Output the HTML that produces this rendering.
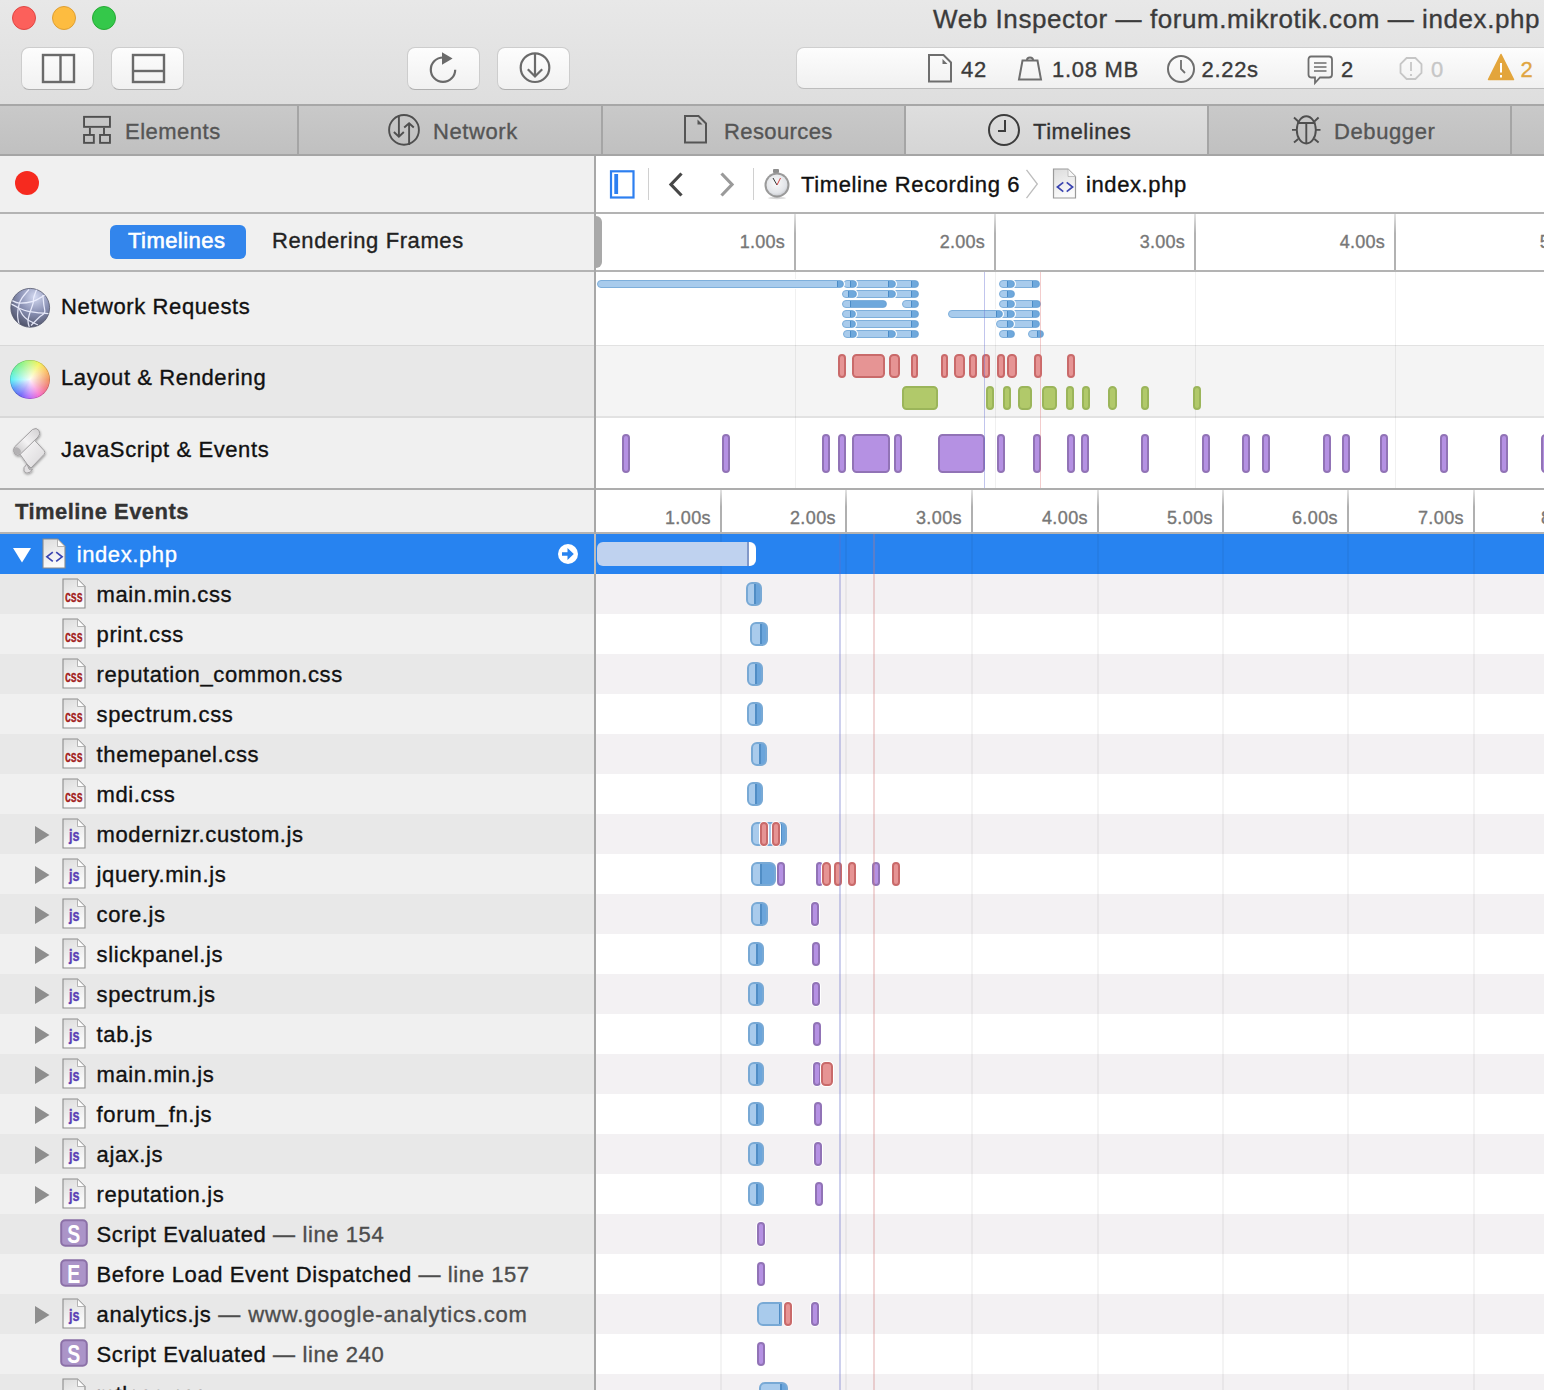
<!DOCTYPE html><html><head><meta charset="utf-8"><style>
html,body{margin:0;padding:0;width:1544px;height:1390px;overflow:hidden;background:#fff}
body{position:relative;font-family:"Liberation Sans",sans-serif}
div{position:absolute}
.t{white-space:pre;line-height:1;-webkit-text-stroke-width:0.35px}
</style></head><body>
<div style="left:0px;top:0px;width:1544px;height:104px;background:linear-gradient(#e8e8e8,#dedede)"></div>
<div style="left:0px;top:104px;width:1544px;height:2px;background:#a7a7a7"></div>
<svg style="position:absolute;left:0px;top:0px;" width="130" height="40" viewBox="0 0 130 40"><circle cx="24" cy="18" r="11.5" fill="#fc605b" stroke="#df4744" stroke-width="1"/><circle cx="64" cy="18" r="11.5" fill="#fdbc40" stroke="#de9f34" stroke-width="1"/><circle cx="104" cy="18" r="11.5" fill="#34c84a" stroke="#27aa35" stroke-width="1"/></svg>
<div style="left:21px;top:46.5px;width:73px;height:43px;box-sizing:border-box;border-radius:8px;background:linear-gradient(#fdfdfd,#f1f1f1);border:1px solid #cdcdcd;border-bottom-color:#b0b0b0"></div>
<div style="left:111px;top:46.5px;width:73px;height:43px;box-sizing:border-box;border-radius:8px;background:linear-gradient(#fdfdfd,#f1f1f1);border:1px solid #cdcdcd;border-bottom-color:#b0b0b0"></div>
<div style="left:407px;top:46.5px;width:73px;height:43px;box-sizing:border-box;border-radius:8px;background:linear-gradient(#fdfdfd,#f1f1f1);border:1px solid #cdcdcd;border-bottom-color:#b0b0b0"></div>
<div style="left:497px;top:46.5px;width:73px;height:43px;box-sizing:border-box;border-radius:8px;background:linear-gradient(#fdfdfd,#f1f1f1);border:1px solid #cdcdcd;border-bottom-color:#b0b0b0"></div>
<svg style="position:absolute;left:21px;top:47px;" width="72" height="42" viewBox="0 0 72 42"><rect x="22" y="8" width="31" height="27" fill="none" stroke="#6a6a6a" stroke-width="2.4"/><line x1="39.5" y1="8" x2="39.5" y2="35" stroke="#6a6a6a" stroke-width="2.4"/></svg>
<svg style="position:absolute;left:111px;top:47px;" width="72" height="42" viewBox="0 0 72 42"><rect x="22" y="8" width="31" height="27" fill="none" stroke="#6a6a6a" stroke-width="2.4"/><line x1="22" y1="24" x2="53" y2="24" stroke="#6a6a6a" stroke-width="2.4"/></svg>
<svg style="position:absolute;left:407px;top:47px;" width="73" height="42" viewBox="0 0 73 42"><path d="M36 10.5 A 12.2 12.2 0 1 0 48.2 22.7" fill="none" stroke="#6a6a6a" stroke-width="2.2"/><path d="M35 5.2 L45.6 11.6 L35 17.8 Z" fill="#6a6a6a"/></svg>
<svg style="position:absolute;left:497px;top:47px;" width="73" height="42" viewBox="0 0 73 42"><circle cx="38" cy="20.7" r="14.3" fill="none" stroke="#6a6a6a" stroke-width="2.2"/><path d="M38 7 V29.5 M30.8 22.2 L38 29.5 L45.2 22.2" fill="none" stroke="#6a6a6a" stroke-width="2.2"/></svg>
<div class="t" style="left:933px;top:5.59px;font-size:26px;letter-spacing:0.58px;font-weight:400;color:#3b3b3b;">Web Inspector — forum.mikrotik.com — index.php</div>
<div style="left:796px;top:47px;width:760px;height:42px;box-sizing:border-box;border-radius:8px;background:linear-gradient(#fdfdfd,#f0f0f0);border:1px solid #cfcfcf;border-bottom-color:#bdbdbd"></div>
<svg style="position:absolute;left:926px;top:52px;" width="30" height="33" viewBox="0 0 30 33"><path d="M3 3 H17.5 L25 10.5 V29.5 H3 Z" fill="none" stroke="#6e6e6e" stroke-width="2"/><path d="M16.5 7 L21.5 12 H16.5 Z" fill="#6e6e6e"/></svg>
<div class="t" style="left:961px;top:59.18px;font-size:22px;letter-spacing:0.8px;font-weight:400;color:#3a3a3a;">42</div>
<svg style="position:absolute;left:1016px;top:54px;" width="30" height="30" viewBox="0 0 30 30"><path d="M6.5 6.5 H21.5 L25 25.5 H3 Z" fill="none" stroke="#6e6e6e" stroke-width="2"/><path d="M11 6 A3 2.6 0 0 1 17 6" fill="none" stroke="#6e6e6e" stroke-width="2"/></svg>
<div class="t" style="left:1052px;top:59.18px;font-size:22px;letter-spacing:0.7px;font-weight:400;color:#3a3a3a;">1.08 MB</div>
<svg style="position:absolute;left:1164px;top:52px;" width="34" height="34" viewBox="0 0 34 34"><circle cx="17" cy="17" r="13" fill="none" stroke="#6e6e6e" stroke-width="2"/><path d="M17 8 V17 L21 21" fill="none" stroke="#6e6e6e" stroke-width="1.8"/></svg>
<div class="t" style="left:1201.5px;top:58.88px;font-size:22px;letter-spacing:0.7px;font-weight:400;color:#3a3a3a;">2.22s</div>
<svg style="position:absolute;left:1306px;top:54px;" width="30" height="32" viewBox="0 0 30 32"><path d="M5 2.5 H23 Q26 2.5 26 5.5 V20.5 Q26 23.5 23 23.5 H14 L9 29 V23.5 H5 Q2.5 23.5 2.5 20.5 V5.5 Q2.5 2.5 5 2.5 Z" fill="none" stroke="#6e6e6e" stroke-width="1.8"/><path d="M8 9 H20.5 M8 13 H20.5 M8 17 H20.5" stroke="#6e6e6e" stroke-width="1.6"/></svg>
<div class="t" style="left:1341px;top:58.88px;font-size:22px;letter-spacing:0.6px;font-weight:400;color:#3a3a3a;">2</div>
<svg style="position:absolute;left:1396px;top:54px;" width="30" height="30" viewBox="0 0 30 30"><path d="M9.6 2.5 H18.4 L24.5 8.6 V17.4 L18.4 23.5 H9.6 L3.5 17.4 V8.6 Z" fill="none" stroke="#c6c6c6" stroke-width="1.8" transform="translate(1,1.5)"/><path d="M15 8 V17 M15 20 V22" stroke="#c6c6c6" stroke-width="1.8"/></svg>
<div class="t" style="left:1431px;top:58.88px;font-size:22px;letter-spacing:0.6px;font-weight:400;color:#c6c6c6;">0</div>
<svg style="position:absolute;left:1486px;top:52px;" width="30" height="30" viewBox="0 0 30 30"><path d="M15 2.5 L27.5 27.5 H2.5 Z" fill="#e3a53b" stroke="#e3a53b" stroke-width="1.5" stroke-linejoin="round"/><path d="M15 11 V20.5 M15 23 V25.5" stroke="#fff" stroke-width="2"/></svg>
<div class="t" style="left:1520.5px;top:58.88px;font-size:22px;letter-spacing:0.6px;font-weight:400;color:#e0a540;">2</div>
<div style="left:0px;top:106px;width:1544px;height:48px;background:linear-gradient(#c9c9c9,#c0c0c0)"></div>
<div style="left:905px;top:106px;width:303px;height:48px;background:linear-gradient(#dedede,#d5d5d5)"></div>
<div style="left:0px;top:154px;width:1544px;height:2px;background:#a5a5a5"></div>
<div style="left:297px;top:106px;width:2px;height:48px;background:#a5a5a5"></div>
<div style="left:601px;top:106px;width:2px;height:48px;background:#a5a5a5"></div>
<div style="left:904px;top:106px;width:2px;height:48px;background:#a5a5a5"></div>
<div style="left:1207px;top:106px;width:2px;height:48px;background:#a5a5a5"></div>
<div style="left:1510px;top:106px;width:2px;height:48px;background:#a5a5a5"></div>
<svg style="position:absolute;left:80px;top:112px;" width="34" height="36" viewBox="0 0 34 36"><g fill="none" stroke="#4f4f4f" stroke-width="1.9"><rect x="4.05" y="4.85" width="25.9" height="10"/><rect x="4.05" y="22.95" width="9.8" height="7.9"/><rect x="20.05" y="22.95" width="9.9" height="7.9"/><path d="M9.9 15.8 V22 M24 15.8 V22"/></g></svg>
<div class="t" style="left:125px;top:120.68px;font-size:22px;letter-spacing:0.5px;font-weight:400;color:#555;">Elements</div>
<svg style="position:absolute;left:386px;top:112px;" width="36" height="36" viewBox="0 0 36 36"><circle cx="18" cy="17.9" r="14.9" fill="none" stroke="#4f4f4f" stroke-width="1.9"/><path d="M12.9 3 V24.3 M7.9 20 L12.9 24.6 L17.8 20 M23.1 33 V11.6 M18.2 15.5 L23.1 11.2 L27.8 15.5" fill="none" stroke="#4f4f4f" stroke-width="1.9"/></svg>
<div class="t" style="left:433px;top:120.68px;font-size:22px;letter-spacing:0.6px;font-weight:400;color:#555;">Network</div>
<svg style="position:absolute;left:682px;top:113px;" width="28" height="33" viewBox="0 0 28 33"><path d="M3 3 H16.5 L24 10.5 V29.5 H3 Z" fill="none" stroke="#555555" stroke-width="2"/><path d="M15.5 6.5 L20.5 11.5 H15.5 Z" fill="#555555"/></svg>
<div class="t" style="left:724px;top:120.68px;font-size:22px;letter-spacing:0.4px;font-weight:400;color:#555;">Resources</div>
<svg style="position:absolute;left:986px;top:112px;" width="36" height="36" viewBox="0 0 36 36"><circle cx="18" cy="18" r="15" fill="none" stroke="#3c3c3c" stroke-width="2"/><path d="M19 8 V19 H12" fill="none" stroke="#3c3c3c" stroke-width="2"/></svg>
<div class="t" style="left:1033px;top:120.68px;font-size:22px;letter-spacing:0.55px;font-weight:400;color:#333;">Timelines</div>
<svg style="position:absolute;left:1289px;top:112px;" width="34" height="36" viewBox="0 0 34 36"><ellipse cx="17.3" cy="17.9" rx="9.5" ry="13.6" fill="none" stroke="#4f4f4f" stroke-width="1.9"/><path d="M8.3 11 H26.3 M17.3 11 V31.5 M3 17.9 H8 M26.6 17.9 H31.5 M5 5.5 L9.3 9.5 M29.6 5.5 L25.3 9.5 M5 30.5 L9.2 27 M29.6 30.5 L25.4 27" fill="none" stroke="#4f4f4f" stroke-width="1.9"/></svg>
<div class="t" style="left:1334px;top:120.68px;font-size:22px;letter-spacing:0.6px;font-weight:400;color:#555;">Debugger</div>
<div style="left:0px;top:156px;width:594px;height:1234px;background:#f0f0f0"></div>
<div style="left:594px;top:156px;width:2px;height:1234px;background:#a8a8a8"></div>
<svg style="position:absolute;left:13px;top:169px;" width="28" height="28" viewBox="0 0 28 28"><circle cx="14" cy="14" r="12" fill="#f62a1f"/></svg>
<div style="left:0px;top:212px;width:594px;height:2px;background:#b3b3b3"></div>
<div style="left:110px;top:225px;width:136px;height:34px;border-radius:6px;background:#3285ec"></div>
<div class="t" style="left:128px;top:230.08px;font-size:22px;letter-spacing:0.45px;font-weight:400;color:#fff;-webkit-text-stroke:0.6px #fff">Timelines</div>
<div class="t" style="left:272px;top:230.08px;font-size:22px;letter-spacing:0.6px;font-weight:400;color:#222;">Rendering Frames</div>
<div style="left:0px;top:270px;width:594px;height:2px;background:#b3b3b3"></div>
<div style="left:0px;top:345px;width:594px;height:71px;background:#e8e8e8"></div>
<div style="left:0px;top:344.5px;width:594px;height:1.3px;background:#d8d8d8"></div>
<div style="left:0px;top:416.3px;width:594px;height:1.3px;background:#d8d8d8"></div>
<div style="left:0px;top:488px;width:594px;height:2px;background:#adadad"></div>
<svg style="position:absolute;left:8px;top:285px;" width="45" height="45" viewBox="0 0 45 45"><defs><radialGradient id="gl" cx="0.62" cy="0.22" r="0.9"><stop offset="0" stop-color="#d4daf2"/><stop offset="0.45" stop-color="#8a91b4"/><stop offset="1" stop-color="#414458"/></radialGradient><clipPath id="gc"><circle cx="22.2" cy="22.8" r="19.2"/></clipPath></defs><circle cx="22.2" cy="22.8" r="19.4" fill="url(#gl)" stroke="#55596e" stroke-width="0.8"/><g clip-path="url(#gc)" fill="none" stroke="#eef0ff" stroke-width="1.25" opacity="0.92"><path d="M3.2 15.2 C4.6 15.7 7.8 17.9 11.4 18.1 C15.1 18.3 21.5 17.2 25.1 16.3 C28.7 15.4 30.9 13.6 33.0 12.4 C35.1 11.2 37.2 9.8 38.0 9.3"/><path d="M2.8 18.7 C4.2 19.4 8.5 21.9 11.4 23.2 C14.3 24.5 17.0 25.6 20.4 26.4 C23.8 27.2 28.0 27.5 31.5 27.9 C35.0 28.3 39.8 28.5 41.5 28.6"/><path d="M21.0 4.5 C19.8 5.9 15.6 10.6 13.9 13.1 C12.2 15.6 11.7 16.7 11.0 19.6 C10.3 22.5 9.5 26.6 9.6 30.4 C9.7 34.2 11.4 40.5 11.8 42.5"/><path d="M28.8 4.0 C28.3 5.4 26.4 10.1 25.8 12.4 C25.2 14.8 25.7 15.7 25.1 18.1 C24.5 20.5 23.1 23.9 22.2 26.8 C21.3 29.8 20.1 33.1 20.0 35.8 C19.9 38.5 21.2 41.8 21.5 43.0"/><path d="M34.8 10.0 C35.0 11.6 35.5 16.7 35.8 19.6 C36.1 22.5 37.4 25.4 36.6 27.5 C35.8 29.6 33.5 30.0 31.2 32.2 C28.9 34.4 24.4 39.1 23.0 40.5"/><path d="M11.0 23.2 C11.7 24.4 13.5 28.4 15.0 30.4 C16.5 32.4 17.5 33.4 20.0 35.0 C22.5 36.6 28.3 39.2 30.0 40.0"/></g></svg>
<div style="left:10.4px;top:360.2px;width:39.2px;height:39.2px;border-radius:50%;background:radial-gradient(circle at 50% 50%,rgba(255,255,255,0.95),rgba(255,255,255,0.5) 35%,rgba(255,255,255,0) 75%),conic-gradient(from 0deg,#b6f36a,#f3f24a 30deg,#fbbd55 60deg,#f08a55 90deg,#f06a78 120deg,#f860c8 150deg,#b45cf8 180deg,#6055f8 210deg,#4a8cf8 240deg,#4af0f4 270deg,#5ef0a8 300deg,#7af27a 330deg,#b6f36a 360deg);box-shadow:inset 0 0 0 0.6px rgba(0,0,0,0.25)"></div>
<svg style="position:absolute;left:8px;top:424px;" width="45" height="55" viewBox="0 0 45 55"><defs><linearGradient id="sc" x1="0" y1="0" x2="1" y2="1"><stop offset="0" stop-color="#fbfafb"/><stop offset="1" stop-color="#d9d7d9"/></linearGradient><linearGradient id="sc2" x1="0" y1="1" x2="1" y2="0"><stop offset="0" stop-color="#bdbbbd"/><stop offset="0.5" stop-color="#f4f3f4"/><stop offset="1" stop-color="#d0ced0"/></linearGradient><filter id="ds" x="-20%" y="-20%" width="140%" height="140%"><feDropShadow dx="0.5" dy="1.2" stdDeviation="0.9" flood-opacity="0.35"/></filter></defs><g filter="url(#ds)" stroke="#a09ea0" stroke-width="1" stroke-linejoin="round"><path d="M11.5 29.5 L25 14.5 L36 26.5 Q37.8 28.5 36 30.5 L23 44 L19 40 Z" fill="url(#sc)"/><path d="M19 40 Q14.5 43.5 16 47.5 Q18.5 50.5 22.5 48 L24.5 45.5 Q22.5 46.5 21 45 Z" fill="#e2e0e2"/><path d="M6.5 23 L24.5 5.5 Q28.5 3 31 6.5 Q33 10 30 13 L12 30.5 Q9.5 32.5 7 30 Q4 26.5 6.5 23 Z" fill="url(#sc2)"/><ellipse cx="9.3" cy="26.8" rx="3" ry="3.8" transform="rotate(-45 9.3 26.8)" fill="#b3b1b3" stroke="none"/></g></svg>
<div class="t" style="left:61px;top:295.68px;font-size:22px;letter-spacing:0.6px;font-weight:400;color:#111;">Network Requests</div>
<div class="t" style="left:61px;top:367.38px;font-size:22px;letter-spacing:0.6px;font-weight:400;color:#111;">Layout &amp; Rendering</div>
<div class="t" style="left:61px;top:439.38px;font-size:22px;letter-spacing:0.6px;font-weight:400;color:#111;">JavaScript &amp; Events</div>
<div class="t" style="left:15px;top:501.18px;font-size:22px;letter-spacing:0.45px;font-weight:700;color:#333;">Timeline Events</div>
<div style="left:0px;top:532px;width:594px;height:2px;background:#b3b3b3"></div>
<div style="left:596px;top:156px;width:948px;height:56px;background:#fff"></div>
<div style="left:596px;top:212px;width:948px;height:2px;background:#b3b3b3"></div>
<div style="left:596px;top:214px;width:948px;height:56px;background:#fff"></div>
<div style="left:596px;top:270px;width:948px;height:2px;background:#b3b3b3"></div>
<div style="left:596px;top:272px;width:948px;height:216px;background:#fff"></div>
<div style="left:596px;top:345px;width:948px;height:71px;background:#f4f4f4"></div>
<div style="left:596px;top:344.5px;width:948px;height:1.3px;background:#e2e2e2"></div>
<div style="left:596px;top:416.3px;width:948px;height:1.3px;background:#e2e2e2"></div>
<div style="left:596px;top:488px;width:948px;height:2px;background:#adadad"></div>
<div style="left:596px;top:490px;width:948px;height:42px;background:#fff"></div>
<div style="left:596px;top:532px;width:948px;height:2px;background:#b3b3b3"></div>
<div style="left:0px;top:534px;width:594px;height:40px;background:#2783f0"></div>
<svg style="position:absolute;left:42px;top:538px;" width="24" height="31" viewBox="0 0 24 31"><defs><linearGradient id="dg" x1="0" y1="0" x2="0.3" y2="1"><stop offset="0" stop-color="#dcdcdc"/><stop offset="1" stop-color="#fbfbfb"/></linearGradient></defs><path d="M1 1 H15.5 L23 8.5 V30 H1 Z" fill="url(#dg)" stroke="#8c8c8c" stroke-width="1.1"/><path d="M15.5 1 V8.5 H23 Z" fill="#fdfdfd" stroke="#a5a5a5" stroke-width="0.8"/><path d="M10.8 14.2 L4.9 18.8 L10.8 23.4 M14.2 14.2 L20.1 18.8 L14.2 23.4" fill="none" stroke="#3a44b0" stroke-width="1.7"/></svg>
<svg style="position:absolute;left:13px;top:548px;" width="18" height="15" viewBox="0 0 18 15"><path d="M0 0 H18 L9 14.5 Z" fill="#fff"/></svg>
<div class="t" style="left:76.7px;top:543.58px;font-size:22px;letter-spacing:0.6px;font-weight:400;color:#fff;">index.php</div>
<svg style="position:absolute;left:557px;top:543px;" width="22" height="22" viewBox="0 0 22 22"><circle cx="11" cy="11" r="10" fill="#fff"/><path d="M5 9.2 H10.5 V5 L16.8 11 L10.5 17 V12.8 H5 Z" fill="#2783f0"/></svg>
<div style="left:0px;top:574px;width:594px;height:40px;background:#e8e8e8"></div>
<svg style="position:absolute;left:62px;top:578px;" width="24" height="31" viewBox="0 0 24 31"><defs><linearGradient id="dg" x1="0" y1="0" x2="0.3" y2="1"><stop offset="0" stop-color="#dcdcdc"/><stop offset="1" stop-color="#fbfbfb"/></linearGradient></defs><path d="M1 1 H15.5 L23 8.5 V30 H1 Z" fill="url(#dg)" stroke="#8c8c8c" stroke-width="1.1"/><path d="M15.5 1 V8.5 H23 Z" fill="#fdfdfd" stroke="#a5a5a5" stroke-width="0.8"/><text x="3" y="23.7" font-family="Liberation Sans" font-weight="700" font-size="16.5" fill="#a32222" stroke="#a32222" stroke-width="0.3" textLength="17.6" lengthAdjust="spacingAndGlyphs">css</text></svg>
<div class="t" style="left:96.6px;top:583.78px;font-size:22px;letter-spacing:0.6px;font-weight:400;color:#111;">main.min.css</div>
<svg style="position:absolute;left:62px;top:618px;" width="24" height="31" viewBox="0 0 24 31"><defs><linearGradient id="dg" x1="0" y1="0" x2="0.3" y2="1"><stop offset="0" stop-color="#dcdcdc"/><stop offset="1" stop-color="#fbfbfb"/></linearGradient></defs><path d="M1 1 H15.5 L23 8.5 V30 H1 Z" fill="url(#dg)" stroke="#8c8c8c" stroke-width="1.1"/><path d="M15.5 1 V8.5 H23 Z" fill="#fdfdfd" stroke="#a5a5a5" stroke-width="0.8"/><text x="3" y="23.7" font-family="Liberation Sans" font-weight="700" font-size="16.5" fill="#a32222" stroke="#a32222" stroke-width="0.3" textLength="17.6" lengthAdjust="spacingAndGlyphs">css</text></svg>
<div class="t" style="left:96.6px;top:623.78px;font-size:22px;letter-spacing:0.6px;font-weight:400;color:#111;">print.css</div>
<div style="left:0px;top:654px;width:594px;height:40px;background:#e8e8e8"></div>
<svg style="position:absolute;left:62px;top:658px;" width="24" height="31" viewBox="0 0 24 31"><defs><linearGradient id="dg" x1="0" y1="0" x2="0.3" y2="1"><stop offset="0" stop-color="#dcdcdc"/><stop offset="1" stop-color="#fbfbfb"/></linearGradient></defs><path d="M1 1 H15.5 L23 8.5 V30 H1 Z" fill="url(#dg)" stroke="#8c8c8c" stroke-width="1.1"/><path d="M15.5 1 V8.5 H23 Z" fill="#fdfdfd" stroke="#a5a5a5" stroke-width="0.8"/><text x="3" y="23.7" font-family="Liberation Sans" font-weight="700" font-size="16.5" fill="#a32222" stroke="#a32222" stroke-width="0.3" textLength="17.6" lengthAdjust="spacingAndGlyphs">css</text></svg>
<div class="t" style="left:96.6px;top:663.78px;font-size:22px;letter-spacing:0.6px;font-weight:400;color:#111;">reputation_common.css</div>
<svg style="position:absolute;left:62px;top:698px;" width="24" height="31" viewBox="0 0 24 31"><defs><linearGradient id="dg" x1="0" y1="0" x2="0.3" y2="1"><stop offset="0" stop-color="#dcdcdc"/><stop offset="1" stop-color="#fbfbfb"/></linearGradient></defs><path d="M1 1 H15.5 L23 8.5 V30 H1 Z" fill="url(#dg)" stroke="#8c8c8c" stroke-width="1.1"/><path d="M15.5 1 V8.5 H23 Z" fill="#fdfdfd" stroke="#a5a5a5" stroke-width="0.8"/><text x="3" y="23.7" font-family="Liberation Sans" font-weight="700" font-size="16.5" fill="#a32222" stroke="#a32222" stroke-width="0.3" textLength="17.6" lengthAdjust="spacingAndGlyphs">css</text></svg>
<div class="t" style="left:96.6px;top:703.78px;font-size:22px;letter-spacing:0.6px;font-weight:400;color:#111;">spectrum.css</div>
<div style="left:0px;top:734px;width:594px;height:40px;background:#e8e8e8"></div>
<svg style="position:absolute;left:62px;top:738px;" width="24" height="31" viewBox="0 0 24 31"><defs><linearGradient id="dg" x1="0" y1="0" x2="0.3" y2="1"><stop offset="0" stop-color="#dcdcdc"/><stop offset="1" stop-color="#fbfbfb"/></linearGradient></defs><path d="M1 1 H15.5 L23 8.5 V30 H1 Z" fill="url(#dg)" stroke="#8c8c8c" stroke-width="1.1"/><path d="M15.5 1 V8.5 H23 Z" fill="#fdfdfd" stroke="#a5a5a5" stroke-width="0.8"/><text x="3" y="23.7" font-family="Liberation Sans" font-weight="700" font-size="16.5" fill="#a32222" stroke="#a32222" stroke-width="0.3" textLength="17.6" lengthAdjust="spacingAndGlyphs">css</text></svg>
<div class="t" style="left:96.6px;top:743.78px;font-size:22px;letter-spacing:0.6px;font-weight:400;color:#111;">themepanel.css</div>
<svg style="position:absolute;left:62px;top:778px;" width="24" height="31" viewBox="0 0 24 31"><defs><linearGradient id="dg" x1="0" y1="0" x2="0.3" y2="1"><stop offset="0" stop-color="#dcdcdc"/><stop offset="1" stop-color="#fbfbfb"/></linearGradient></defs><path d="M1 1 H15.5 L23 8.5 V30 H1 Z" fill="url(#dg)" stroke="#8c8c8c" stroke-width="1.1"/><path d="M15.5 1 V8.5 H23 Z" fill="#fdfdfd" stroke="#a5a5a5" stroke-width="0.8"/><text x="3" y="23.7" font-family="Liberation Sans" font-weight="700" font-size="16.5" fill="#a32222" stroke="#a32222" stroke-width="0.3" textLength="17.6" lengthAdjust="spacingAndGlyphs">css</text></svg>
<div class="t" style="left:96.6px;top:783.78px;font-size:22px;letter-spacing:0.6px;font-weight:400;color:#111;">mdi.css</div>
<div style="left:0px;top:814px;width:594px;height:40px;background:#e8e8e8"></div>
<svg style="position:absolute;left:62px;top:818px;" width="24" height="31" viewBox="0 0 24 31"><defs><linearGradient id="dg" x1="0" y1="0" x2="0.3" y2="1"><stop offset="0" stop-color="#dcdcdc"/><stop offset="1" stop-color="#fbfbfb"/></linearGradient></defs><path d="M1 1 H15.5 L23 8.5 V30 H1 Z" fill="url(#dg)" stroke="#8c8c8c" stroke-width="1.1"/><path d="M15.5 1 V8.5 H23 Z" fill="#fdfdfd" stroke="#a5a5a5" stroke-width="0.8"/><text x="7" y="23.2" font-family="Liberation Sans" font-weight="700" font-size="16" fill="#5a3fb5" stroke="#5a3fb5" stroke-width="0.4" textLength="10.5" lengthAdjust="spacingAndGlyphs">js</text></svg>
<svg style="position:absolute;left:35px;top:826px;" width="15" height="18" viewBox="0 0 15 18"><path d="M0 0 V18 L14.5 9 Z" fill="#8e8e8e"/></svg>
<div class="t" style="left:96.6px;top:823.78px;font-size:22px;letter-spacing:0.6px;font-weight:400;color:#111;">modernizr.custom.js</div>
<svg style="position:absolute;left:62px;top:858px;" width="24" height="31" viewBox="0 0 24 31"><defs><linearGradient id="dg" x1="0" y1="0" x2="0.3" y2="1"><stop offset="0" stop-color="#dcdcdc"/><stop offset="1" stop-color="#fbfbfb"/></linearGradient></defs><path d="M1 1 H15.5 L23 8.5 V30 H1 Z" fill="url(#dg)" stroke="#8c8c8c" stroke-width="1.1"/><path d="M15.5 1 V8.5 H23 Z" fill="#fdfdfd" stroke="#a5a5a5" stroke-width="0.8"/><text x="7" y="23.2" font-family="Liberation Sans" font-weight="700" font-size="16" fill="#5a3fb5" stroke="#5a3fb5" stroke-width="0.4" textLength="10.5" lengthAdjust="spacingAndGlyphs">js</text></svg>
<svg style="position:absolute;left:35px;top:866px;" width="15" height="18" viewBox="0 0 15 18"><path d="M0 0 V18 L14.5 9 Z" fill="#8e8e8e"/></svg>
<div class="t" style="left:96.6px;top:863.78px;font-size:22px;letter-spacing:0.6px;font-weight:400;color:#111;">jquery.min.js</div>
<div style="left:0px;top:894px;width:594px;height:40px;background:#e8e8e8"></div>
<svg style="position:absolute;left:62px;top:898px;" width="24" height="31" viewBox="0 0 24 31"><defs><linearGradient id="dg" x1="0" y1="0" x2="0.3" y2="1"><stop offset="0" stop-color="#dcdcdc"/><stop offset="1" stop-color="#fbfbfb"/></linearGradient></defs><path d="M1 1 H15.5 L23 8.5 V30 H1 Z" fill="url(#dg)" stroke="#8c8c8c" stroke-width="1.1"/><path d="M15.5 1 V8.5 H23 Z" fill="#fdfdfd" stroke="#a5a5a5" stroke-width="0.8"/><text x="7" y="23.2" font-family="Liberation Sans" font-weight="700" font-size="16" fill="#5a3fb5" stroke="#5a3fb5" stroke-width="0.4" textLength="10.5" lengthAdjust="spacingAndGlyphs">js</text></svg>
<svg style="position:absolute;left:35px;top:906px;" width="15" height="18" viewBox="0 0 15 18"><path d="M0 0 V18 L14.5 9 Z" fill="#8e8e8e"/></svg>
<div class="t" style="left:96.6px;top:903.78px;font-size:22px;letter-spacing:0.6px;font-weight:400;color:#111;">core.js</div>
<svg style="position:absolute;left:62px;top:938px;" width="24" height="31" viewBox="0 0 24 31"><defs><linearGradient id="dg" x1="0" y1="0" x2="0.3" y2="1"><stop offset="0" stop-color="#dcdcdc"/><stop offset="1" stop-color="#fbfbfb"/></linearGradient></defs><path d="M1 1 H15.5 L23 8.5 V30 H1 Z" fill="url(#dg)" stroke="#8c8c8c" stroke-width="1.1"/><path d="M15.5 1 V8.5 H23 Z" fill="#fdfdfd" stroke="#a5a5a5" stroke-width="0.8"/><text x="7" y="23.2" font-family="Liberation Sans" font-weight="700" font-size="16" fill="#5a3fb5" stroke="#5a3fb5" stroke-width="0.4" textLength="10.5" lengthAdjust="spacingAndGlyphs">js</text></svg>
<svg style="position:absolute;left:35px;top:946px;" width="15" height="18" viewBox="0 0 15 18"><path d="M0 0 V18 L14.5 9 Z" fill="#8e8e8e"/></svg>
<div class="t" style="left:96.6px;top:943.78px;font-size:22px;letter-spacing:0.6px;font-weight:400;color:#111;">slickpanel.js</div>
<div style="left:0px;top:974px;width:594px;height:40px;background:#e8e8e8"></div>
<svg style="position:absolute;left:62px;top:978px;" width="24" height="31" viewBox="0 0 24 31"><defs><linearGradient id="dg" x1="0" y1="0" x2="0.3" y2="1"><stop offset="0" stop-color="#dcdcdc"/><stop offset="1" stop-color="#fbfbfb"/></linearGradient></defs><path d="M1 1 H15.5 L23 8.5 V30 H1 Z" fill="url(#dg)" stroke="#8c8c8c" stroke-width="1.1"/><path d="M15.5 1 V8.5 H23 Z" fill="#fdfdfd" stroke="#a5a5a5" stroke-width="0.8"/><text x="7" y="23.2" font-family="Liberation Sans" font-weight="700" font-size="16" fill="#5a3fb5" stroke="#5a3fb5" stroke-width="0.4" textLength="10.5" lengthAdjust="spacingAndGlyphs">js</text></svg>
<svg style="position:absolute;left:35px;top:986px;" width="15" height="18" viewBox="0 0 15 18"><path d="M0 0 V18 L14.5 9 Z" fill="#8e8e8e"/></svg>
<div class="t" style="left:96.6px;top:983.78px;font-size:22px;letter-spacing:0.6px;font-weight:400;color:#111;">spectrum.js</div>
<svg style="position:absolute;left:62px;top:1018px;" width="24" height="31" viewBox="0 0 24 31"><defs><linearGradient id="dg" x1="0" y1="0" x2="0.3" y2="1"><stop offset="0" stop-color="#dcdcdc"/><stop offset="1" stop-color="#fbfbfb"/></linearGradient></defs><path d="M1 1 H15.5 L23 8.5 V30 H1 Z" fill="url(#dg)" stroke="#8c8c8c" stroke-width="1.1"/><path d="M15.5 1 V8.5 H23 Z" fill="#fdfdfd" stroke="#a5a5a5" stroke-width="0.8"/><text x="7" y="23.2" font-family="Liberation Sans" font-weight="700" font-size="16" fill="#5a3fb5" stroke="#5a3fb5" stroke-width="0.4" textLength="10.5" lengthAdjust="spacingAndGlyphs">js</text></svg>
<svg style="position:absolute;left:35px;top:1026px;" width="15" height="18" viewBox="0 0 15 18"><path d="M0 0 V18 L14.5 9 Z" fill="#8e8e8e"/></svg>
<div class="t" style="left:96.6px;top:1023.78px;font-size:22px;letter-spacing:0.6px;font-weight:400;color:#111;">tab.js</div>
<div style="left:0px;top:1054px;width:594px;height:40px;background:#e8e8e8"></div>
<svg style="position:absolute;left:62px;top:1058px;" width="24" height="31" viewBox="0 0 24 31"><defs><linearGradient id="dg" x1="0" y1="0" x2="0.3" y2="1"><stop offset="0" stop-color="#dcdcdc"/><stop offset="1" stop-color="#fbfbfb"/></linearGradient></defs><path d="M1 1 H15.5 L23 8.5 V30 H1 Z" fill="url(#dg)" stroke="#8c8c8c" stroke-width="1.1"/><path d="M15.5 1 V8.5 H23 Z" fill="#fdfdfd" stroke="#a5a5a5" stroke-width="0.8"/><text x="7" y="23.2" font-family="Liberation Sans" font-weight="700" font-size="16" fill="#5a3fb5" stroke="#5a3fb5" stroke-width="0.4" textLength="10.5" lengthAdjust="spacingAndGlyphs">js</text></svg>
<svg style="position:absolute;left:35px;top:1066px;" width="15" height="18" viewBox="0 0 15 18"><path d="M0 0 V18 L14.5 9 Z" fill="#8e8e8e"/></svg>
<div class="t" style="left:96.6px;top:1063.78px;font-size:22px;letter-spacing:0.6px;font-weight:400;color:#111;">main.min.js</div>
<svg style="position:absolute;left:62px;top:1098px;" width="24" height="31" viewBox="0 0 24 31"><defs><linearGradient id="dg" x1="0" y1="0" x2="0.3" y2="1"><stop offset="0" stop-color="#dcdcdc"/><stop offset="1" stop-color="#fbfbfb"/></linearGradient></defs><path d="M1 1 H15.5 L23 8.5 V30 H1 Z" fill="url(#dg)" stroke="#8c8c8c" stroke-width="1.1"/><path d="M15.5 1 V8.5 H23 Z" fill="#fdfdfd" stroke="#a5a5a5" stroke-width="0.8"/><text x="7" y="23.2" font-family="Liberation Sans" font-weight="700" font-size="16" fill="#5a3fb5" stroke="#5a3fb5" stroke-width="0.4" textLength="10.5" lengthAdjust="spacingAndGlyphs">js</text></svg>
<svg style="position:absolute;left:35px;top:1106px;" width="15" height="18" viewBox="0 0 15 18"><path d="M0 0 V18 L14.5 9 Z" fill="#8e8e8e"/></svg>
<div class="t" style="left:96.6px;top:1103.78px;font-size:22px;letter-spacing:0.6px;font-weight:400;color:#111;">forum_fn.js</div>
<div style="left:0px;top:1134px;width:594px;height:40px;background:#e8e8e8"></div>
<svg style="position:absolute;left:62px;top:1138px;" width="24" height="31" viewBox="0 0 24 31"><defs><linearGradient id="dg" x1="0" y1="0" x2="0.3" y2="1"><stop offset="0" stop-color="#dcdcdc"/><stop offset="1" stop-color="#fbfbfb"/></linearGradient></defs><path d="M1 1 H15.5 L23 8.5 V30 H1 Z" fill="url(#dg)" stroke="#8c8c8c" stroke-width="1.1"/><path d="M15.5 1 V8.5 H23 Z" fill="#fdfdfd" stroke="#a5a5a5" stroke-width="0.8"/><text x="7" y="23.2" font-family="Liberation Sans" font-weight="700" font-size="16" fill="#5a3fb5" stroke="#5a3fb5" stroke-width="0.4" textLength="10.5" lengthAdjust="spacingAndGlyphs">js</text></svg>
<svg style="position:absolute;left:35px;top:1146px;" width="15" height="18" viewBox="0 0 15 18"><path d="M0 0 V18 L14.5 9 Z" fill="#8e8e8e"/></svg>
<div class="t" style="left:96.6px;top:1143.78px;font-size:22px;letter-spacing:0.6px;font-weight:400;color:#111;">ajax.js</div>
<svg style="position:absolute;left:62px;top:1178px;" width="24" height="31" viewBox="0 0 24 31"><defs><linearGradient id="dg" x1="0" y1="0" x2="0.3" y2="1"><stop offset="0" stop-color="#dcdcdc"/><stop offset="1" stop-color="#fbfbfb"/></linearGradient></defs><path d="M1 1 H15.5 L23 8.5 V30 H1 Z" fill="url(#dg)" stroke="#8c8c8c" stroke-width="1.1"/><path d="M15.5 1 V8.5 H23 Z" fill="#fdfdfd" stroke="#a5a5a5" stroke-width="0.8"/><text x="7" y="23.2" font-family="Liberation Sans" font-weight="700" font-size="16" fill="#5a3fb5" stroke="#5a3fb5" stroke-width="0.4" textLength="10.5" lengthAdjust="spacingAndGlyphs">js</text></svg>
<svg style="position:absolute;left:35px;top:1186px;" width="15" height="18" viewBox="0 0 15 18"><path d="M0 0 V18 L14.5 9 Z" fill="#8e8e8e"/></svg>
<div class="t" style="left:96.6px;top:1183.78px;font-size:22px;letter-spacing:0.6px;font-weight:400;color:#111;">reputation.js</div>
<div style="left:0px;top:1214px;width:594px;height:40px;background:#e8e8e8"></div>
<svg style="position:absolute;left:60px;top:1219px;" width="29" height="30" viewBox="0 0 29 30"><rect x="1.2" y="1.2" width="25.6" height="25.6" rx="4" fill="#ab94c8" stroke="#8b70a7" stroke-width="2"/><text x="7.2" y="23.8" font-family="Liberation Sans" font-weight="700" font-size="25" fill="#fff" textLength="13" lengthAdjust="spacingAndGlyphs">S</text></svg>
<div class="t" style="left:96.6px;top:1223.78px;font-size:22px;letter-spacing:0.6px;font-weight:400;color:#111;">Script Evaluated<span style="color:#4d4d4d;letter-spacing:0.6px"> — line 154</span></div>
<svg style="position:absolute;left:60px;top:1259px;" width="29" height="30" viewBox="0 0 29 30"><rect x="1.2" y="1.2" width="25.6" height="25.6" rx="4" fill="#ab94c8" stroke="#8b70a7" stroke-width="2"/><text x="7.2" y="23.8" font-family="Liberation Sans" font-weight="700" font-size="25" fill="#fff" textLength="13" lengthAdjust="spacingAndGlyphs">E</text></svg>
<div class="t" style="left:96.6px;top:1263.78px;font-size:22px;letter-spacing:0.6px;font-weight:400;color:#111;">Before Load Event Dispatched<span style="color:#4d4d4d;letter-spacing:0.6px"> — line 157</span></div>
<div style="left:0px;top:1294px;width:594px;height:40px;background:#e8e8e8"></div>
<svg style="position:absolute;left:62px;top:1298px;" width="24" height="31" viewBox="0 0 24 31"><defs><linearGradient id="dg" x1="0" y1="0" x2="0.3" y2="1"><stop offset="0" stop-color="#dcdcdc"/><stop offset="1" stop-color="#fbfbfb"/></linearGradient></defs><path d="M1 1 H15.5 L23 8.5 V30 H1 Z" fill="url(#dg)" stroke="#8c8c8c" stroke-width="1.1"/><path d="M15.5 1 V8.5 H23 Z" fill="#fdfdfd" stroke="#a5a5a5" stroke-width="0.8"/><text x="7" y="23.2" font-family="Liberation Sans" font-weight="700" font-size="16" fill="#5a3fb5" stroke="#5a3fb5" stroke-width="0.4" textLength="10.5" lengthAdjust="spacingAndGlyphs">js</text></svg>
<svg style="position:absolute;left:35px;top:1306px;" width="15" height="18" viewBox="0 0 15 18"><path d="M0 0 V18 L14.5 9 Z" fill="#8e8e8e"/></svg>
<div class="t" style="left:96.6px;top:1303.78px;font-size:22px;letter-spacing:0.6px;font-weight:400;color:#111;">analytics.js<span style="color:#4d4d4d;letter-spacing:0.85px"> — www.google-analytics.com</span></div>
<svg style="position:absolute;left:60px;top:1339px;" width="29" height="30" viewBox="0 0 29 30"><rect x="1.2" y="1.2" width="25.6" height="25.6" rx="4" fill="#ab94c8" stroke="#8b70a7" stroke-width="2"/><text x="7.2" y="23.8" font-family="Liberation Sans" font-weight="700" font-size="25" fill="#fff" textLength="13" lengthAdjust="spacingAndGlyphs">S</text></svg>
<div class="t" style="left:96.6px;top:1343.78px;font-size:22px;letter-spacing:0.6px;font-weight:400;color:#111;">Script Evaluated<span style="color:#4d4d4d;letter-spacing:0.6px"> — line 240</span></div>
<div style="left:0px;top:1374px;width:594px;height:16px;background:#e8e8e8"></div>
<svg style="position:absolute;left:62px;top:1378px;" width="24" height="31" viewBox="0 0 24 31"><defs><linearGradient id="dg" x1="0" y1="0" x2="0.3" y2="1"><stop offset="0" stop-color="#dcdcdc"/><stop offset="1" stop-color="#fbfbfb"/></linearGradient></defs><path d="M1 1 H15.5 L23 8.5 V30 H1 Z" fill="url(#dg)" stroke="#8c8c8c" stroke-width="1.1"/><path d="M15.5 1 V8.5 H23 Z" fill="#fdfdfd" stroke="#a5a5a5" stroke-width="0.8"/><text x="3" y="23.7" font-family="Liberation Sans" font-weight="700" font-size="16.5" fill="#a32222" stroke="#a32222" stroke-width="0.3" textLength="17.6" lengthAdjust="spacingAndGlyphs">css</text></svg>
<div class="t" style="left:96.6px;top:1383.78px;font-size:22px;letter-spacing:0.6px;font-weight:400;color:#111;">mtlese.css</div>
<div style="left:596px;top:534px;width:948px;height:40px;background:#2783f0"></div>
<div style="left:596px;top:574px;width:948px;height:40px;background:#f3f1f3"></div>
<div style="left:596px;top:654px;width:948px;height:40px;background:#f3f1f3"></div>
<div style="left:596px;top:734px;width:948px;height:40px;background:#f3f1f3"></div>
<div style="left:596px;top:814px;width:948px;height:40px;background:#f3f1f3"></div>
<div style="left:596px;top:894px;width:948px;height:40px;background:#f3f1f3"></div>
<div style="left:596px;top:974px;width:948px;height:40px;background:#f3f1f3"></div>
<div style="left:596px;top:1054px;width:948px;height:40px;background:#f3f1f3"></div>
<div style="left:596px;top:1134px;width:948px;height:40px;background:#f3f1f3"></div>
<div style="left:596px;top:1214px;width:948px;height:40px;background:#f3f1f3"></div>
<div style="left:596px;top:1294px;width:948px;height:40px;background:#f3f1f3"></div>
<div style="left:596px;top:1374px;width:948px;height:16px;background:#f3f1f3"></div>
<div style="left:594px;top:534px;width:2px;height:40px;background:#bcbcbc"></div>
<svg style="position:absolute;left:608px;top:168px;" width="28" height="32" viewBox="0 0 28 32"><rect x="3" y="3.3" width="22.5" height="26.2" fill="none" stroke="#2d7ff0" stroke-width="2.2"/><rect x="6.3" y="6" width="3.8" height="20" fill="#2d7ff0"/></svg>
<div style="left:648px;top:168px;width:1px;height:32px;background:#d0d0d0"></div>
<svg style="position:absolute;left:664px;top:170px;" width="24" height="30" viewBox="0 0 24 30"><path d="M17.5 3.5 L7 14.5 L17.5 25.5" fill="none" stroke="#474747" stroke-width="3.2"/></svg>
<svg style="position:absolute;left:716px;top:170px;" width="24" height="30" viewBox="0 0 24 30"><path d="M5.5 3.5 L16 14.5 L5.5 25.5" fill="none" stroke="#9a9a9a" stroke-width="3.2"/></svg>
<div style="left:753px;top:168px;width:1px;height:32px;background:#d0d0d0"></div>
<svg style="position:absolute;left:763px;top:167px;" width="30" height="33" viewBox="0 0 30 33"><defs><radialGradient id="sw" cx="0.45" cy="0.4" r="0.7"><stop offset="0" stop-color="#fafafa"/><stop offset="0.7" stop-color="#e2e4e8"/><stop offset="1" stop-color="#b8bbc0"/></radialGradient></defs><rect x="10" y="2" width="6" height="4" rx="1" fill="#8d8d8d"/><rect x="12" y="5" width="2" height="3" fill="#8d8d8d"/><circle cx="14" cy="18" r="12.5" fill="#9a9a9a"/><circle cx="14" cy="18" r="10.5" fill="url(#sw)"/><path d="M14 18 L10 11" stroke="#333" stroke-width="1"/><path d="M14 18 L17.5 11" stroke="#d03030" stroke-width="0.9"/><ellipse cx="14" cy="31" rx="9" ry="1.2" fill="#000" opacity="0.15"/></svg>
<div class="t" style="left:801px;top:173.68px;font-size:22px;letter-spacing:0.6px;font-weight:400;color:#111;">Timeline Recording 6</div>
<svg style="position:absolute;left:1024px;top:169px;" width="16" height="31" viewBox="0 0 16 31"><path d="M2.5 0.8 L13.3 15 L2.5 29.2" fill="none" stroke="#bdbdbd" stroke-width="1.3"/></svg>
<svg style="position:absolute;left:1051.5px;top:168px;" width="26" height="31" viewBox="0 0 26 31"><defs><linearGradient id="dg2" x1="0" y1="0" x2="0.3" y2="1"><stop offset="0" stop-color="#dcdcdc"/><stop offset="1" stop-color="#fbfbfb"/></linearGradient></defs><path d="M1.5 1 H16 L23.5 8.5 V30 H1.5 Z" fill="url(#dg2)" stroke="#9a9a9a" stroke-width="1.2"/><path d="M16 1 V8.5 H23.5 Z" fill="#f7f7f7" stroke="#b5b5b5" stroke-width="0.8"/><path d="M11.3 14.4 L5.4 19 L11.3 23.6 M14.7 14.4 L20.6 19 L14.7 23.6" fill="none" stroke="#3a44b0" stroke-width="1.7"/></svg>
<div class="t" style="left:1086px;top:173.68px;font-size:22px;letter-spacing:0.6px;font-weight:400;color:#111;">index.php</div>
<div style="left:794.2px;top:214px;width:1.6px;height:56px;background:linear-gradient(#e2e2e2,#b2b2b2 35%,#b2b2b2)"></div>
<div style="left:794.5px;top:272px;width:1.5px;height:216px;background:rgba(0,0,0,0.06)"></div>
<div class="t" style="left:685px;top:232.56px;width:100px;text-align:right;font-size:18px;letter-spacing:0.25px;color:#777">1.00s</div>
<div style="left:994.2px;top:214px;width:1.6px;height:56px;background:linear-gradient(#e2e2e2,#b2b2b2 35%,#b2b2b2)"></div>
<div style="left:994.5px;top:272px;width:1.5px;height:216px;background:rgba(0,0,0,0.06)"></div>
<div class="t" style="left:885px;top:232.56px;width:100px;text-align:right;font-size:18px;letter-spacing:0.25px;color:#777">2.00s</div>
<div style="left:1194.2px;top:214px;width:1.6px;height:56px;background:linear-gradient(#e2e2e2,#b2b2b2 35%,#b2b2b2)"></div>
<div style="left:1194.5px;top:272px;width:1.5px;height:216px;background:rgba(0,0,0,0.06)"></div>
<div class="t" style="left:1085px;top:232.56px;width:100px;text-align:right;font-size:18px;letter-spacing:0.25px;color:#777">3.00s</div>
<div style="left:1394.2px;top:214px;width:1.6px;height:56px;background:linear-gradient(#e2e2e2,#b2b2b2 35%,#b2b2b2)"></div>
<div style="left:1394.5px;top:272px;width:1.5px;height:216px;background:rgba(0,0,0,0.06)"></div>
<div class="t" style="left:1285px;top:232.56px;width:100px;text-align:right;font-size:18px;letter-spacing:0.25px;color:#777">4.00s</div>
<div class="t" style="left:1485px;top:232.56px;width:100px;text-align:right;font-size:18px;letter-spacing:0.25px;color:#777">5.00s</div>
<div style="left:596px;top:216px;width:6px;height:52px;background:#a9a9a9;border-radius:0 7px 7px 0"></div>
<div style="left:720.1px;top:490px;width:1.6px;height:42px;background:linear-gradient(#e2e2e2,#b0b0b0 40%,#b0b0b0)"></div>
<div style="left:720.1px;top:534px;width:1.5px;height:856px;background:rgba(0,0,0,0.045)"></div>
<div class="t" style="left:611px;top:508.96px;width:100px;text-align:right;font-size:18px;letter-spacing:0.4px;color:#777">1.00s</div>
<div style="left:845.1px;top:490px;width:1.6px;height:42px;background:linear-gradient(#e2e2e2,#b0b0b0 40%,#b0b0b0)"></div>
<div style="left:845.1px;top:534px;width:1.5px;height:856px;background:rgba(0,0,0,0.045)"></div>
<div class="t" style="left:736px;top:508.96px;width:100px;text-align:right;font-size:18px;letter-spacing:0.4px;color:#777">2.00s</div>
<div style="left:971.1px;top:490px;width:1.6px;height:42px;background:linear-gradient(#e2e2e2,#b0b0b0 40%,#b0b0b0)"></div>
<div style="left:971.1px;top:534px;width:1.5px;height:856px;background:rgba(0,0,0,0.045)"></div>
<div class="t" style="left:862px;top:508.96px;width:100px;text-align:right;font-size:18px;letter-spacing:0.4px;color:#777">3.00s</div>
<div style="left:1097.1px;top:490px;width:1.6px;height:42px;background:linear-gradient(#e2e2e2,#b0b0b0 40%,#b0b0b0)"></div>
<div style="left:1097.1px;top:534px;width:1.5px;height:856px;background:rgba(0,0,0,0.045)"></div>
<div class="t" style="left:988px;top:508.96px;width:100px;text-align:right;font-size:18px;letter-spacing:0.4px;color:#777">4.00s</div>
<div style="left:1222.1px;top:490px;width:1.6px;height:42px;background:linear-gradient(#e2e2e2,#b0b0b0 40%,#b0b0b0)"></div>
<div style="left:1222.1px;top:534px;width:1.5px;height:856px;background:rgba(0,0,0,0.045)"></div>
<div class="t" style="left:1113px;top:508.96px;width:100px;text-align:right;font-size:18px;letter-spacing:0.4px;color:#777">5.00s</div>
<div style="left:1347.1px;top:490px;width:1.6px;height:42px;background:linear-gradient(#e2e2e2,#b0b0b0 40%,#b0b0b0)"></div>
<div style="left:1347.1px;top:534px;width:1.5px;height:856px;background:rgba(0,0,0,0.045)"></div>
<div class="t" style="left:1238px;top:508.96px;width:100px;text-align:right;font-size:18px;letter-spacing:0.4px;color:#777">6.00s</div>
<div style="left:1473.1px;top:490px;width:1.6px;height:42px;background:linear-gradient(#e2e2e2,#b0b0b0 40%,#b0b0b0)"></div>
<div style="left:1473.1px;top:534px;width:1.5px;height:856px;background:rgba(0,0,0,0.045)"></div>
<div class="t" style="left:1364px;top:508.96px;width:100px;text-align:right;font-size:18px;letter-spacing:0.4px;color:#777">7.00s</div>
<div class="t" style="left:1487px;top:508.96px;width:100px;text-align:right;font-size:18px;letter-spacing:0.4px;color:#777">8.00s</div>
<div style="left:1010px;top:280px;width:30px;height:8px;box-sizing:border-box;border-radius:4.0px;background:#a8cbec;border:1px solid #7eafdb;box-shadow:0 0 0 1px #fff;overflow:hidden"><div style="left:21px;top:-1px;width:8px;height:8px;box-sizing:border-box;background:#6ea8dc;border:1px solid #4a8bc6;border-radius:0 4.0px 4.0px 0"></div></div>
<div style="left:998.5px;top:280px;width:16.5px;height:8px;box-sizing:border-box;border-radius:4.0px;background:#a8cbec;border:1px solid #7eafdb;box-shadow:0 0 0 1px #fff;overflow:hidden"><div style="left:7.5px;top:-1px;width:8px;height:8px;box-sizing:border-box;background:#6ea8dc;border:1px solid #4a8bc6;border-radius:0 4.0px 4.0px 0"></div></div>
<div style="left:890px;top:280px;width:29px;height:8px;box-sizing:border-box;border-radius:4.0px;background:#a8cbec;border:1px solid #7eafdb;box-shadow:0 0 0 1px #fff;overflow:hidden"><div style="left:20px;top:-1px;width:8px;height:8px;box-sizing:border-box;background:#6ea8dc;border:1px solid #4a8bc6;border-radius:0 4.0px 4.0px 0"></div></div>
<div style="left:852px;top:280px;width:44px;height:8px;box-sizing:border-box;border-radius:4.0px;background:#a8cbec;border:1px solid #7eafdb;box-shadow:0 0 0 1px #fff;overflow:hidden"><div style="left:35px;top:-1px;width:8px;height:8px;box-sizing:border-box;background:#6ea8dc;border:1px solid #4a8bc6;border-radius:0 4.0px 4.0px 0"></div></div>
<div style="left:843px;top:280px;width:14px;height:8px;box-sizing:border-box;border-radius:4.0px;background:#a8cbec;border:1px solid #7eafdb;box-shadow:0 0 0 1px #fff;overflow:hidden"><div style="left:6px;top:-1px;width:7px;height:8px;box-sizing:border-box;background:#6ea8dc;border:1px solid #4a8bc6;border-radius:0 4.0px 4.0px 0"></div></div>
<div style="left:597px;top:280px;width:247px;height:8px;box-sizing:border-box;border-radius:4.0px;background:#a8cbec;border:1px solid #7eafdb;box-shadow:0 0 0 1px #fff;overflow:hidden"><div style="left:239px;top:-1px;width:7px;height:8px;box-sizing:border-box;background:#6ea8dc;border:1px solid #4a8bc6;border-radius:0 4.0px 4.0px 0"></div></div>
<div style="left:999px;top:290px;width:16px;height:8px;box-sizing:border-box;border-radius:4.0px;background:#a8cbec;border:1px solid #7eafdb;box-shadow:0 0 0 1px #fff;overflow:hidden"><div style="left:7px;top:-1px;width:8px;height:8px;box-sizing:border-box;background:#6ea8dc;border:1px solid #4a8bc6;border-radius:0 4.0px 4.0px 0"></div></div>
<div style="left:890px;top:290px;width:29px;height:8px;box-sizing:border-box;border-radius:4.0px;background:#a8cbec;border:1px solid #7eafdb;box-shadow:0 0 0 1px #fff;overflow:hidden"><div style="left:20px;top:-1px;width:8px;height:8px;box-sizing:border-box;background:#6ea8dc;border:1px solid #4a8bc6;border-radius:0 4.0px 4.0px 0"></div></div>
<div style="left:852px;top:290px;width:44px;height:8px;box-sizing:border-box;border-radius:4.0px;background:#a8cbec;border:1px solid #7eafdb;box-shadow:0 0 0 1px #fff;overflow:hidden"><div style="left:35px;top:-1px;width:8px;height:8px;box-sizing:border-box;background:#6ea8dc;border:1px solid #4a8bc6;border-radius:0 4.0px 4.0px 0"></div></div>
<div style="left:842px;top:290px;width:15px;height:8px;box-sizing:border-box;border-radius:4.0px;background:#a8cbec;border:1px solid #7eafdb;box-shadow:0 0 0 1px #fff;overflow:hidden"><div style="left:5px;top:-1px;width:9px;height:8px;box-sizing:border-box;background:#6ea8dc;border:1px solid #4a8bc6;border-radius:0 4.0px 4.0px 0"></div></div>
<div style="left:1010px;top:300px;width:30.5px;height:8px;box-sizing:border-box;border-radius:4.0px;background:#a8cbec;border:1px solid #7eafdb;box-shadow:0 0 0 1px #fff;overflow:hidden"><div style="left:21px;top:-1px;width:8.5px;height:8px;box-sizing:border-box;background:#6ea8dc;border:1px solid #4a8bc6;border-radius:0 4.0px 4.0px 0"></div></div>
<div style="left:999px;top:300px;width:16px;height:8px;box-sizing:border-box;border-radius:4.0px;background:#a8cbec;border:1px solid #7eafdb;box-shadow:0 0 0 1px #fff;overflow:hidden"><div style="left:7px;top:-1px;width:8px;height:8px;box-sizing:border-box;background:#6ea8dc;border:1px solid #4a8bc6;border-radius:0 4.0px 4.0px 0"></div></div>
<div style="left:902px;top:300px;width:17px;height:8px;box-sizing:border-box;border-radius:4.0px;background:#a8cbec;border:1px solid #7eafdb;box-shadow:0 0 0 1px #fff;overflow:hidden"><div style="left:8px;top:-1px;width:8px;height:8px;box-sizing:border-box;background:#6ea8dc;border:1px solid #4a8bc6;border-radius:0 4.0px 4.0px 0"></div></div>
<div style="left:1010px;top:310px;width:30px;height:8px;box-sizing:border-box;border-radius:4.0px;background:#a8cbec;border:1px solid #7eafdb;box-shadow:0 0 0 1px #fff;overflow:hidden"><div style="left:21px;top:-1px;width:8px;height:8px;box-sizing:border-box;background:#6ea8dc;border:1px solid #4a8bc6;border-radius:0 4.0px 4.0px 0"></div></div>
<div style="left:998px;top:310px;width:17px;height:8px;box-sizing:border-box;border-radius:4.0px;background:#a8cbec;border:1px solid #7eafdb;box-shadow:0 0 0 1px #fff;overflow:hidden"><div style="left:8px;top:-1px;width:8px;height:8px;box-sizing:border-box;background:#6ea8dc;border:1px solid #4a8bc6;border-radius:0 4.0px 4.0px 0"></div></div>
<div style="left:948px;top:310px;width:55px;height:8px;box-sizing:border-box;border-radius:4.0px;background:#a8cbec;border:1px solid #7eafdb;box-shadow:0 0 0 1px #fff;overflow:hidden"><div style="left:47px;top:-1px;width:7px;height:8px;box-sizing:border-box;background:#6ea8dc;border:1px solid #4a8bc6;border-radius:0 4.0px 4.0px 0"></div></div>
<div style="left:851px;top:310px;width:68px;height:8px;box-sizing:border-box;border-radius:4.0px;background:#a8cbec;border:1px solid #7eafdb;box-shadow:0 0 0 1px #fff;overflow:hidden"><div style="left:59px;top:-1px;width:8px;height:8px;box-sizing:border-box;background:#6ea8dc;border:1px solid #4a8bc6;border-radius:0 4.0px 4.0px 0"></div></div>
<div style="left:842px;top:310px;width:14px;height:8px;box-sizing:border-box;border-radius:4.0px;background:#a8cbec;border:1px solid #7eafdb;box-shadow:0 0 0 1px #fff;overflow:hidden"><div style="left:7px;top:-1px;width:6px;height:8px;box-sizing:border-box;background:#6ea8dc;border:1px solid #4a8bc6;border-radius:0 4.0px 4.0px 0"></div></div>
<div style="left:1009px;top:320px;width:31px;height:8px;box-sizing:border-box;border-radius:4.0px;background:#a8cbec;border:1px solid #7eafdb;box-shadow:0 0 0 1px #fff;overflow:hidden"><div style="left:22px;top:-1px;width:8px;height:8px;box-sizing:border-box;background:#6ea8dc;border:1px solid #4a8bc6;border-radius:0 4.0px 4.0px 0"></div></div>
<div style="left:996px;top:320px;width:18px;height:8px;box-sizing:border-box;border-radius:4.0px;background:#a8cbec;border:1px solid #7eafdb;box-shadow:0 0 0 1px #fff;overflow:hidden"><div style="left:10px;top:-1px;width:7px;height:8px;box-sizing:border-box;background:#6ea8dc;border:1px solid #4a8bc6;border-radius:0 4.0px 4.0px 0"></div></div>
<div style="left:851px;top:320px;width:68px;height:8px;box-sizing:border-box;border-radius:4.0px;background:#a8cbec;border:1px solid #7eafdb;box-shadow:0 0 0 1px #fff;overflow:hidden"><div style="left:59px;top:-1px;width:8px;height:8px;box-sizing:border-box;background:#6ea8dc;border:1px solid #4a8bc6;border-radius:0 4.0px 4.0px 0"></div></div>
<div style="left:842px;top:320px;width:14px;height:8px;box-sizing:border-box;border-radius:4.0px;background:#a8cbec;border:1px solid #7eafdb;box-shadow:0 0 0 1px #fff;overflow:hidden"><div style="left:7px;top:-1px;width:6px;height:8px;box-sizing:border-box;background:#6ea8dc;border:1px solid #4a8bc6;border-radius:0 4.0px 4.0px 0"></div></div>
<div style="left:1028px;top:330px;width:16px;height:8px;box-sizing:border-box;border-radius:4.0px;background:#a8cbec;border:1px solid #7eafdb;box-shadow:0 0 0 1px #fff;overflow:hidden"><div style="left:8px;top:-1px;width:7px;height:8px;box-sizing:border-box;background:#6ea8dc;border:1px solid #4a8bc6;border-radius:0 4.0px 4.0px 0"></div></div>
<div style="left:998.5px;top:330px;width:16.5px;height:8px;box-sizing:border-box;border-radius:4.0px;background:#a8cbec;border:1px solid #7eafdb;box-shadow:0 0 0 1px #fff;overflow:hidden"><div style="left:7.5px;top:-1px;width:8px;height:8px;box-sizing:border-box;background:#6ea8dc;border:1px solid #4a8bc6;border-radius:0 4.0px 4.0px 0"></div></div>
<div style="left:890px;top:330px;width:29px;height:8px;box-sizing:border-box;border-radius:4.0px;background:#a8cbec;border:1px solid #7eafdb;box-shadow:0 0 0 1px #fff;overflow:hidden"><div style="left:20px;top:-1px;width:8px;height:8px;box-sizing:border-box;background:#6ea8dc;border:1px solid #4a8bc6;border-radius:0 4.0px 4.0px 0"></div></div>
<div style="left:852px;top:330px;width:44px;height:8px;box-sizing:border-box;border-radius:4.0px;background:#a8cbec;border:1px solid #7eafdb;box-shadow:0 0 0 1px #fff;overflow:hidden"><div style="left:35px;top:-1px;width:8px;height:8px;box-sizing:border-box;background:#6ea8dc;border:1px solid #4a8bc6;border-radius:0 4.0px 4.0px 0"></div></div>
<div style="left:843px;top:330px;width:14px;height:8px;box-sizing:border-box;border-radius:4.0px;background:#a8cbec;border:1px solid #7eafdb;box-shadow:0 0 0 1px #fff;overflow:hidden"><div style="left:6px;top:-1px;width:7px;height:8px;box-sizing:border-box;background:#6ea8dc;border:1px solid #4a8bc6;border-radius:0 4.0px 4.0px 0"></div></div>
<div style="left:842px;top:300px;width:45px;height:8px;box-sizing:border-box;border-radius:4.0px;background:#a8cbec;border:1px solid #7eafdb;box-shadow:0 0 0 1px #fff;overflow:hidden"><div style="left:7px;top:-1px;width:37px;height:8px;box-sizing:border-box;background:#6ea8dc;border:1px solid #4a8bc6;border-radius:0 4.0px 4.0px 0"></div></div>
<div style="left:838px;top:354.3px;width:8px;height:23.3px;box-sizing:border-box;background:#e69494;border:2px solid #c96a6a;border-radius:4.5px;"></div>
<div style="left:852px;top:354.3px;width:33px;height:23.3px;box-sizing:border-box;background:#e69494;border:2px solid #c96a6a;border-radius:4.5px;"></div>
<div style="left:889px;top:354.3px;width:10.5px;height:23.3px;box-sizing:border-box;background:#e69494;border:2px solid #c96a6a;border-radius:4.5px;"></div>
<div style="left:911px;top:354.3px;width:7.4px;height:23.3px;box-sizing:border-box;background:#e69494;border:2px solid #c96a6a;border-radius:4.5px;"></div>
<div style="left:940.5px;top:354.3px;width:7.2px;height:23.3px;box-sizing:border-box;background:#e69494;border:2px solid #c96a6a;border-radius:4.5px;"></div>
<div style="left:954px;top:354.3px;width:10.6px;height:23.3px;box-sizing:border-box;background:#e69494;border:2px solid #c96a6a;border-radius:4.5px;"></div>
<div style="left:969px;top:354.3px;width:8px;height:23.3px;box-sizing:border-box;background:#e69494;border:2px solid #c96a6a;border-radius:4.5px;"></div>
<div style="left:982px;top:354.3px;width:7.7px;height:23.3px;box-sizing:border-box;background:#e69494;border:2px solid #c96a6a;border-radius:4.5px;"></div>
<div style="left:997px;top:354.3px;width:7.7px;height:23.3px;box-sizing:border-box;background:#e69494;border:2px solid #c96a6a;border-radius:4.5px;"></div>
<div style="left:1007px;top:354.3px;width:10.4px;height:23.3px;box-sizing:border-box;background:#e69494;border:2px solid #c96a6a;border-radius:4.5px;"></div>
<div style="left:1034px;top:354.3px;width:7.5px;height:23.3px;box-sizing:border-box;background:#e69494;border:2px solid #c96a6a;border-radius:4.5px;"></div>
<div style="left:1067.4px;top:354.3px;width:7.3px;height:23.3px;box-sizing:border-box;background:#e69494;border:2px solid #c96a6a;border-radius:4.5px;"></div>
<div style="left:902.4px;top:386.3px;width:35.6px;height:23.3px;box-sizing:border-box;background:#b1c96a;border:2px solid #9bb55a;border-radius:4.5px;"></div>
<div style="left:985.8px;top:386.3px;width:7.8px;height:23.3px;box-sizing:border-box;background:#b1c96a;border:2px solid #9bb55a;border-radius:4.5px;"></div>
<div style="left:1003px;top:386.3px;width:8px;height:23.3px;box-sizing:border-box;background:#b1c96a;border:2px solid #9bb55a;border-radius:4.5px;"></div>
<div style="left:1018px;top:386.3px;width:13.7px;height:23.3px;box-sizing:border-box;background:#b1c96a;border:2px solid #9bb55a;border-radius:4.5px;"></div>
<div style="left:1042px;top:386.3px;width:14.5px;height:23.3px;box-sizing:border-box;background:#b1c96a;border:2px solid #9bb55a;border-radius:4.5px;"></div>
<div style="left:1066px;top:386.3px;width:8px;height:23.3px;box-sizing:border-box;background:#b1c96a;border:2px solid #9bb55a;border-radius:4.5px;"></div>
<div style="left:1082px;top:386.3px;width:8px;height:23.3px;box-sizing:border-box;background:#b1c96a;border:2px solid #9bb55a;border-radius:4.5px;"></div>
<div style="left:1108px;top:386.3px;width:8.6px;height:23.3px;box-sizing:border-box;background:#b1c96a;border:2px solid #9bb55a;border-radius:4.5px;"></div>
<div style="left:1140.7px;top:386.3px;width:8.3px;height:23.3px;box-sizing:border-box;background:#b1c96a;border:2px solid #9bb55a;border-radius:4.5px;"></div>
<div style="left:1193px;top:386.3px;width:7.8px;height:23.3px;box-sizing:border-box;background:#b1c96a;border:2px solid #9bb55a;border-radius:4.5px;"></div>
<div style="left:621.8px;top:434.2px;width:8.2px;height:39.2px;box-sizing:border-box;background:#b591e3;border:2px solid #9173b6;border-radius:4.5px;"></div>
<div style="left:721.8px;top:434.2px;width:8.2px;height:39.2px;box-sizing:border-box;background:#b591e3;border:2px solid #9173b6;border-radius:4.5px;"></div>
<div style="left:821.8px;top:434.2px;width:8.2px;height:39.2px;box-sizing:border-box;background:#b591e3;border:2px solid #9173b6;border-radius:4.5px;"></div>
<div style="left:837.8px;top:434.2px;width:8.4px;height:39.2px;box-sizing:border-box;background:#b591e3;border:2px solid #9173b6;border-radius:4.5px;"></div>
<div style="left:852px;top:434.2px;width:38px;height:39.2px;box-sizing:border-box;background:#b591e3;border:2px solid #9173b6;border-radius:4.5px;"></div>
<div style="left:893.7px;top:434.2px;width:8.3px;height:39.2px;box-sizing:border-box;background:#b591e3;border:2px solid #9173b6;border-radius:4.5px;"></div>
<div style="left:938px;top:434.2px;width:47px;height:39.2px;box-sizing:border-box;background:#b591e3;border:2px solid #9173b6;border-radius:4.5px;"></div>
<div style="left:996.6px;top:434.2px;width:8.2px;height:39.2px;box-sizing:border-box;background:#b591e3;border:2px solid #9173b6;border-radius:4.5px;"></div>
<div style="left:1032.8px;top:434.2px;width:8.2px;height:39.2px;box-sizing:border-box;background:#b591e3;border:2px solid #9173b6;border-radius:4.5px;"></div>
<div style="left:1066.6px;top:434.2px;width:8.4px;height:39.2px;box-sizing:border-box;background:#b591e3;border:2px solid #9173b6;border-radius:4.5px;"></div>
<div style="left:1081px;top:434.2px;width:8px;height:39.2px;box-sizing:border-box;background:#b591e3;border:2px solid #9173b6;border-radius:4.5px;"></div>
<div style="left:1141px;top:434.2px;width:8px;height:39.2px;box-sizing:border-box;background:#b591e3;border:2px solid #9173b6;border-radius:4.5px;"></div>
<div style="left:1202px;top:434.2px;width:8px;height:39.2px;box-sizing:border-box;background:#b591e3;border:2px solid #9173b6;border-radius:4.5px;"></div>
<div style="left:1242px;top:434.2px;width:8px;height:39.2px;box-sizing:border-box;background:#b591e3;border:2px solid #9173b6;border-radius:4.5px;"></div>
<div style="left:1262px;top:434.2px;width:8px;height:39.2px;box-sizing:border-box;background:#b591e3;border:2px solid #9173b6;border-radius:4.5px;"></div>
<div style="left:1323px;top:434.2px;width:8px;height:39.2px;box-sizing:border-box;background:#b591e3;border:2px solid #9173b6;border-radius:4.5px;"></div>
<div style="left:1342px;top:434.2px;width:8px;height:39.2px;box-sizing:border-box;background:#b591e3;border:2px solid #9173b6;border-radius:4.5px;"></div>
<div style="left:1379.5px;top:434.2px;width:8.5px;height:39.2px;box-sizing:border-box;background:#b591e3;border:2px solid #9173b6;border-radius:4.5px;"></div>
<div style="left:1439.7px;top:434.2px;width:8.3px;height:39.2px;box-sizing:border-box;background:#b591e3;border:2px solid #9173b6;border-radius:4.5px;"></div>
<div style="left:1499.5px;top:434.2px;width:8.5px;height:39.2px;box-sizing:border-box;background:#b591e3;border:2px solid #9173b6;border-radius:4.5px;"></div>
<div style="left:1541px;top:434.2px;width:15px;height:39.2px;box-sizing:border-box;background:#b591e3;border:2px solid #9173b6;border-radius:4.5px;"></div>
<div style="left:983.5px;top:272px;width:1.5px;height:216px;background:rgba(100,110,210,0.4)"></div>
<div style="left:1039.5px;top:272px;width:1.5px;height:216px;background:rgba(220,110,110,0.35)"></div>
<div style="left:597px;top:542px;width:158.5px;height:24px;border-radius:6px;background:#bfd2ef;overflow:hidden"><div style="left:150px;top:0;width:8.5px;height:24px;background:#fff;border-left:2px solid #8299c9;border-radius:0 7px 7px 0;box-sizing:border-box"></div></div>
<div style="left:746px;top:582px;width:16px;height:23.5px;box-sizing:border-box;border-radius:6px 6px 6px 6px;background:#a9cbec;border:2px solid #78a9d5;overflow:hidden"><div style="left:6px;top:-2px;width:8px;height:23.5px;box-sizing:border-box;background:#6ba5db;border:2px solid #508dc5;border-radius:0 6px 6px 0"></div></div>
<div style="left:750px;top:622px;width:18px;height:23.5px;box-sizing:border-box;border-radius:6px 6px 6px 6px;background:#a9cbec;border:2px solid #78a9d5;overflow:hidden"><div style="left:8px;top:-2px;width:8px;height:23.5px;box-sizing:border-box;background:#6ba5db;border:2px solid #508dc5;border-radius:0 6px 6px 0"></div></div>
<div style="left:747px;top:662px;width:16px;height:23.5px;box-sizing:border-box;border-radius:6px 6px 6px 6px;background:#a9cbec;border:2px solid #78a9d5;overflow:hidden"><div style="left:6px;top:-2px;width:8px;height:23.5px;box-sizing:border-box;background:#6ba5db;border:2px solid #508dc5;border-radius:0 6px 6px 0"></div></div>
<div style="left:747px;top:702px;width:16px;height:23.5px;box-sizing:border-box;border-radius:6px 6px 6px 6px;background:#a9cbec;border:2px solid #78a9d5;overflow:hidden"><div style="left:6px;top:-2px;width:8px;height:23.5px;box-sizing:border-box;background:#6ba5db;border:2px solid #508dc5;border-radius:0 6px 6px 0"></div></div>
<div style="left:751px;top:742px;width:16px;height:23.5px;box-sizing:border-box;border-radius:6px 6px 6px 6px;background:#a9cbec;border:2px solid #78a9d5;overflow:hidden"><div style="left:6px;top:-2px;width:8px;height:23.5px;box-sizing:border-box;background:#6ba5db;border:2px solid #508dc5;border-radius:0 6px 6px 0"></div></div>
<div style="left:747px;top:782px;width:16px;height:23.5px;box-sizing:border-box;border-radius:6px 6px 6px 6px;background:#a9cbec;border:2px solid #78a9d5;overflow:hidden"><div style="left:6px;top:-2px;width:8px;height:23.5px;box-sizing:border-box;background:#6ba5db;border:2px solid #508dc5;border-radius:0 6px 6px 0"></div></div>
<div style="left:751px;top:822px;width:36px;height:23.5px;box-sizing:border-box;border-radius:6px 6px 6px 6px;background:#a9cbec;border:2px solid #78a9d5;overflow:hidden"><div style="left:27px;top:-2px;width:7px;height:23.5px;box-sizing:border-box;background:#6ba5db;border:2px solid #508dc5;border-radius:0 6px 6px 0"></div></div>
<div style="left:760px;top:822px;width:8px;height:23.5px;box-sizing:border-box;background:#e69494;border:2px solid #c96a6a;border-radius:4.5px;box-shadow:0 0 0 1px #fff;"></div>
<div style="left:772px;top:822px;width:8px;height:23.5px;box-sizing:border-box;background:#e69494;border:2px solid #c96a6a;border-radius:4.5px;box-shadow:0 0 0 1px #fff;"></div>
<div style="left:751px;top:862px;width:24.6px;height:23.5px;box-sizing:border-box;border-radius:6px 6px 6px 6px;background:#a9cbec;border:2px solid #78a9d5;overflow:hidden"><div style="left:7px;top:-2px;width:15.6px;height:23.5px;box-sizing:border-box;background:#6ba5db;border:2px solid #508dc5;border-radius:0 6px 6px 0"></div></div>
<div style="left:777px;top:862px;width:8px;height:23.5px;box-sizing:border-box;background:#b591e3;border:2px solid #9173b6;border-radius:4.5px;box-shadow:0 0 0 1px #fff;"></div>
<div style="left:816px;top:862px;width:7px;height:23.5px;box-sizing:border-box;background:#b591e3;border:2px solid #9173b6;border-radius:4.5px;box-shadow:0 0 0 1px #fff;"></div>
<div style="left:822px;top:862px;width:8.6px;height:23.5px;box-sizing:border-box;background:#e69494;border:2px solid #c96a6a;border-radius:4.5px;box-shadow:0 0 0 1px #fff;"></div>
<div style="left:834px;top:862px;width:8px;height:23.5px;box-sizing:border-box;background:#e69494;border:2px solid #c96a6a;border-radius:4.5px;box-shadow:0 0 0 1px #fff;"></div>
<div style="left:848px;top:862px;width:8px;height:23.5px;box-sizing:border-box;background:#e69494;border:2px solid #c96a6a;border-radius:4.5px;box-shadow:0 0 0 1px #fff;"></div>
<div style="left:872px;top:862px;width:8px;height:23.5px;box-sizing:border-box;background:#b591e3;border:2px solid #9173b6;border-radius:4.5px;box-shadow:0 0 0 1px #fff;"></div>
<div style="left:892px;top:862px;width:8px;height:23.5px;box-sizing:border-box;background:#e69494;border:2px solid #c96a6a;border-radius:4.5px;box-shadow:0 0 0 1px #fff;"></div>
<div style="left:751px;top:902px;width:17px;height:23.5px;box-sizing:border-box;border-radius:6px 6px 6px 6px;background:#a9cbec;border:2px solid #78a9d5;overflow:hidden"><div style="left:7px;top:-2px;width:8px;height:23.5px;box-sizing:border-box;background:#6ba5db;border:2px solid #508dc5;border-radius:0 6px 6px 0"></div></div>
<div style="left:811px;top:902px;width:8px;height:23.5px;box-sizing:border-box;background:#b591e3;border:2px solid #9173b6;border-radius:4.5px;box-shadow:0 0 0 1px #fff;"></div>
<div style="left:748px;top:942px;width:16px;height:23.5px;box-sizing:border-box;border-radius:6px 6px 6px 6px;background:#a9cbec;border:2px solid #78a9d5;overflow:hidden"><div style="left:6px;top:-2px;width:8px;height:23.5px;box-sizing:border-box;background:#6ba5db;border:2px solid #508dc5;border-radius:0 6px 6px 0"></div></div>
<div style="left:812px;top:942px;width:8px;height:23.5px;box-sizing:border-box;background:#b591e3;border:2px solid #9173b6;border-radius:4.5px;box-shadow:0 0 0 1px #fff;"></div>
<div style="left:748px;top:982px;width:16px;height:23.5px;box-sizing:border-box;border-radius:6px 6px 6px 6px;background:#a9cbec;border:2px solid #78a9d5;overflow:hidden"><div style="left:6px;top:-2px;width:8px;height:23.5px;box-sizing:border-box;background:#6ba5db;border:2px solid #508dc5;border-radius:0 6px 6px 0"></div></div>
<div style="left:812px;top:982px;width:8px;height:23.5px;box-sizing:border-box;background:#b591e3;border:2px solid #9173b6;border-radius:4.5px;box-shadow:0 0 0 1px #fff;"></div>
<div style="left:748px;top:1022px;width:16px;height:23.5px;box-sizing:border-box;border-radius:6px 6px 6px 6px;background:#a9cbec;border:2px solid #78a9d5;overflow:hidden"><div style="left:6px;top:-2px;width:8px;height:23.5px;box-sizing:border-box;background:#6ba5db;border:2px solid #508dc5;border-radius:0 6px 6px 0"></div></div>
<div style="left:813px;top:1022px;width:8px;height:23.5px;box-sizing:border-box;background:#b591e3;border:2px solid #9173b6;border-radius:4.5px;box-shadow:0 0 0 1px #fff;"></div>
<div style="left:748px;top:1102px;width:16px;height:23.5px;box-sizing:border-box;border-radius:6px 6px 6px 6px;background:#a9cbec;border:2px solid #78a9d5;overflow:hidden"><div style="left:6px;top:-2px;width:8px;height:23.5px;box-sizing:border-box;background:#6ba5db;border:2px solid #508dc5;border-radius:0 6px 6px 0"></div></div>
<div style="left:814px;top:1102px;width:8px;height:23.5px;box-sizing:border-box;background:#b591e3;border:2px solid #9173b6;border-radius:4.5px;box-shadow:0 0 0 1px #fff;"></div>
<div style="left:748px;top:1142px;width:16px;height:23.5px;box-sizing:border-box;border-radius:6px 6px 6px 6px;background:#a9cbec;border:2px solid #78a9d5;overflow:hidden"><div style="left:6px;top:-2px;width:8px;height:23.5px;box-sizing:border-box;background:#6ba5db;border:2px solid #508dc5;border-radius:0 6px 6px 0"></div></div>
<div style="left:814px;top:1142px;width:8px;height:23.5px;box-sizing:border-box;background:#b591e3;border:2px solid #9173b6;border-radius:4.5px;box-shadow:0 0 0 1px #fff;"></div>
<div style="left:748px;top:1182px;width:16px;height:23.5px;box-sizing:border-box;border-radius:6px 6px 6px 6px;background:#a9cbec;border:2px solid #78a9d5;overflow:hidden"><div style="left:6px;top:-2px;width:8px;height:23.5px;box-sizing:border-box;background:#6ba5db;border:2px solid #508dc5;border-radius:0 6px 6px 0"></div></div>
<div style="left:815px;top:1182px;width:8px;height:23.5px;box-sizing:border-box;background:#b591e3;border:2px solid #9173b6;border-radius:4.5px;box-shadow:0 0 0 1px #fff;"></div>
<div style="left:748px;top:1062px;width:16px;height:23.5px;box-sizing:border-box;border-radius:6px 6px 6px 6px;background:#a9cbec;border:2px solid #78a9d5;overflow:hidden"><div style="left:6px;top:-2px;width:8px;height:23.5px;box-sizing:border-box;background:#6ba5db;border:2px solid #508dc5;border-radius:0 6px 6px 0"></div></div>
<div style="left:813px;top:1062px;width:8px;height:23.5px;box-sizing:border-box;background:#b591e3;border:2px solid #9173b6;border-radius:4.5px;box-shadow:0 0 0 1px #fff;"></div>
<div style="left:821px;top:1062px;width:12px;height:23.5px;box-sizing:border-box;background:#e69494;border:2px solid #c96a6a;border-radius:4.5px;box-shadow:0 0 0 1px #fff;"></div>
<div style="left:757px;top:1222px;width:8px;height:23.5px;box-sizing:border-box;background:#b591e3;border:2px solid #9173b6;border-radius:4.5px;box-shadow:0 0 0 1px #fff;"></div>
<div style="left:757px;top:1262px;width:8px;height:23.5px;box-sizing:border-box;background:#b591e3;border:2px solid #9173b6;border-radius:4.5px;box-shadow:0 0 0 1px #fff;"></div>
<div style="left:757px;top:1302px;width:25px;height:23.5px;box-sizing:border-box;border-radius:6px 1px 1px 6px;background:#a9cbec;border:2px solid #78a9d5;overflow:hidden"><div style="left:20px;top:-2px;width:3px;height:23.5px;box-sizing:border-box;background:#6ba5db;border:2px solid #508dc5;border-radius:0 6px 6px 0"></div></div>
<div style="left:784px;top:1302px;width:8px;height:23.5px;box-sizing:border-box;background:#e69494;border:2px solid #c96a6a;border-radius:4.5px;box-shadow:0 0 0 1px #fff;"></div>
<div style="left:811px;top:1302px;width:8px;height:23.5px;box-sizing:border-box;background:#b591e3;border:2px solid #9173b6;border-radius:4.5px;box-shadow:0 0 0 1px #fff;"></div>
<div style="left:757px;top:1342px;width:8px;height:23.5px;box-sizing:border-box;background:#b591e3;border:2px solid #9173b6;border-radius:4.5px;box-shadow:0 0 0 1px #fff;"></div>
<div style="left:759px;top:1382px;width:29px;height:23.5px;box-sizing:border-box;border-radius:6px 6px 6px 6px;background:#a9cbec;border:2px solid #78a9d5;overflow:hidden"><div style="left:19px;top:-2px;width:8px;height:23.5px;box-sizing:border-box;background:#6ba5db;border:2px solid #508dc5;border-radius:0 6px 6px 0"></div></div>
<div style="left:839px;top:534px;width:2px;height:856px;background:rgba(100,110,200,0.32)"></div>
<div style="left:873px;top:534px;width:2px;height:856px;background:rgba(210,120,120,0.3)"></div>
</body></html>
